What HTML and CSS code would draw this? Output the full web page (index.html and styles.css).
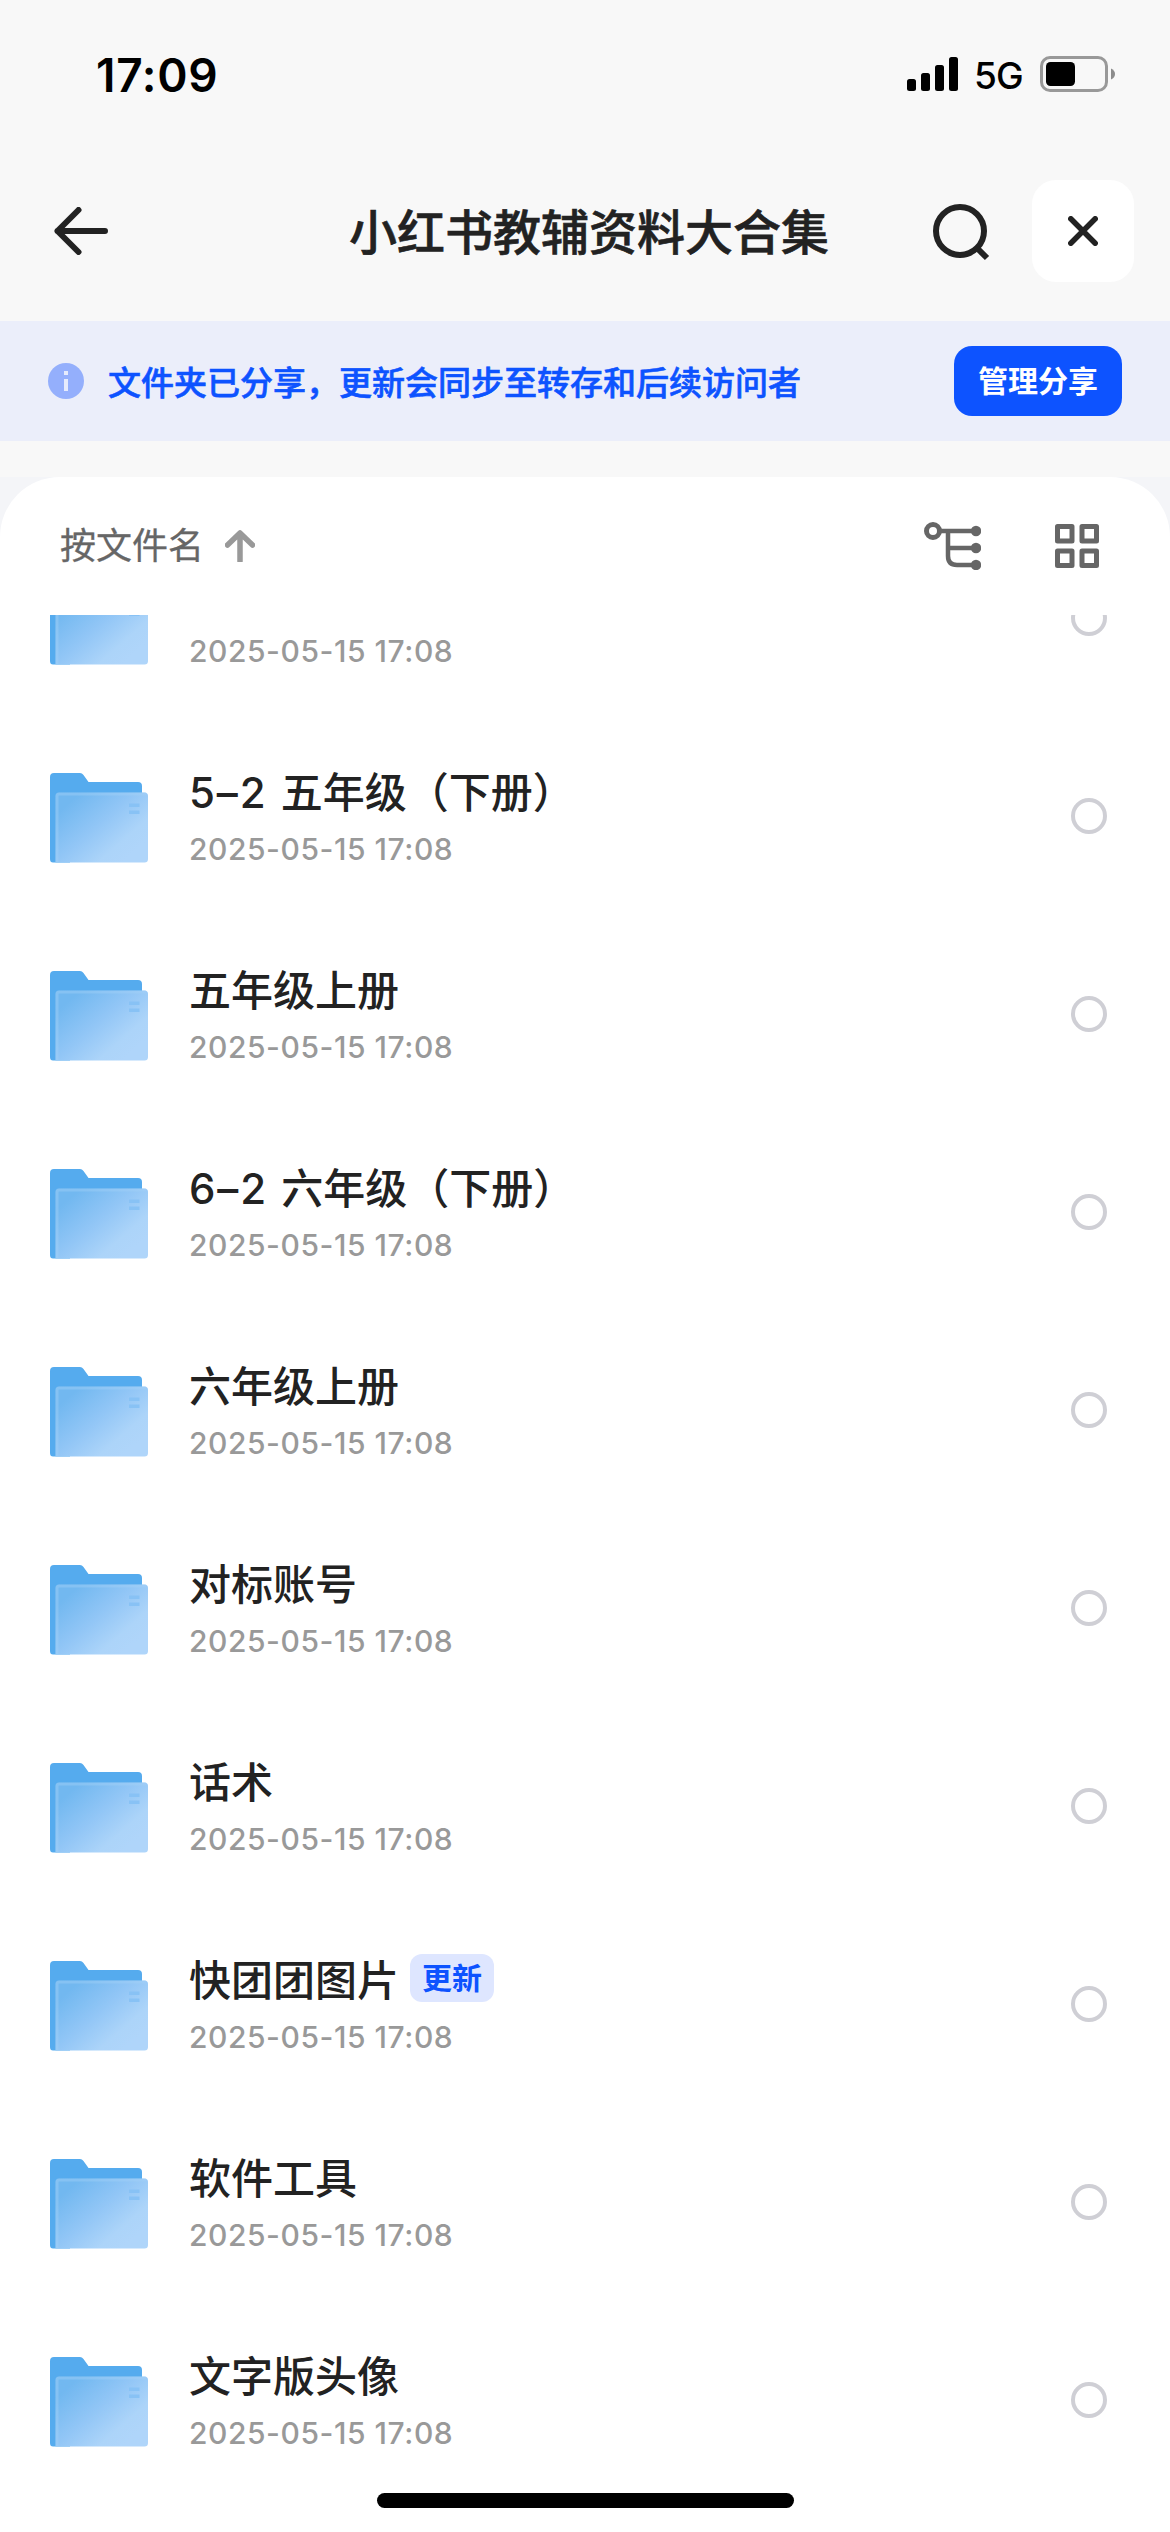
FILE: index.html
```html
<!DOCTYPE html>
<html lang="zh-CN">
<head>
<meta charset="utf-8">
<title>小红书教辅资料大合集</title>
<link rel="stylesheet" href="styles.css">
</head>
<body>
<svg class="defs" width="0" height="0" aria-hidden="true">
  <defs>
    <linearGradient id="front" x1="0.1" y1="0.2" x2="0.85" y2="0.85">
      <stop offset="0" stop-color="#72b8f0"/>
      <stop offset="0.45" stop-color="#92c6f6"/>
      <stop offset="0.8" stop-color="#acd4f9"/>
      <stop offset="1" stop-color="#afd5fa"/>
    </linearGradient>
    <symbol id="folder" viewBox="0 0 98 90">
      <path d="M4 0H30Q32 0 33.500 2L38.500 9H88Q92 9 92 13V30H20V89.500H3Q0 89.500 0 86V4Q0 0 4 0Z" fill="#55abee"/>
      <path d="M9 19.500H94.500Q98 19.500 98 23V86Q98 89.500 94.500 89.500H5.500V23Q5.500 19.500 9 19.500Z" fill="url(#front)"/>
      <path d="M7 89.500V23Q7 21 9 21H96" fill="none" stroke="#a6d2f8" stroke-opacity="0.4" stroke-width="3"/>
      <path d="M79 30.500H89.500V34H79ZM79 37.500H89.500V41H79Z" fill="#88c2f5"/>
    </symbol>
  </defs>
</svg>
<div class="screen">
  <header class="status">
    <span class="time">17:09</span>
    <div class="status-icons">
      <svg class="signal" width="51" height="34" viewBox="0 0 51 34"><rect x="0" y="22" width="9" height="12" rx="2.500"/><rect x="14" y="16" width="9" height="18" rx="2.500"/><rect x="28" y="8" width="9" height="26" rx="2.500"/><rect x="42" y="0" width="9" height="34" rx="2.500"/></svg>
      <span class="network">5G</span>
      <svg class="battery" width="76" height="36" viewBox="0 0 76 36"><rect x="1.500" y="1.500" width="65" height="33" rx="8.500" fill="none" stroke="#999" stroke-width="3"/><rect x="6" y="6" width="29" height="24" rx="4.500"/><path d="M71 12.500Q75 14.500 75 18T71 23.500Z" fill="#8c8c8c"/></svg>
    </div>
  </header>
  <nav class="nav">
    <svg class="back" width="54" height="48" viewBox="0 0 54 48"><path d="M24.500 3L3.500 24L24.500 45M3.500 24H51"/></svg>
    <h1 class="title">小红书教辅资料大合集</h1>
    <svg class="search" width="58" height="58" viewBox="0 0 58 58"><circle cx="27" cy="27" r="24"/><path d="M44 44L54 54"/></svg>
    <button class="close" type="button" aria-label="关闭"><svg width="30" height="30" viewBox="0 0 30 30"><path d="M2.800 2.800L27.200 27.200M27.200 2.800L2.800 27.200"/></svg></button>
  </nav>
  <section class="banner">
    <svg class="info" width="36" height="36" viewBox="0 0 36 36"><circle cx="18" cy="18" r="18" fill="#94affc"/><path d="M16 8H20V12H16ZM16 16H20V28H16Z" fill="#e6ebfc"/></svg>
    <p class="banner-text">文件夹已分享，更新会同步至转存和后续访问者</p>
    <button class="manage" type="button">管理分享</button>
  </section>
  <main class="sheet-area">
    <div class="sheet">
      <div class="toolbar">
        <span class="sort">按文件名</span>
        <svg class="arrow" width="30" height="32" viewBox="0 0 30 32"><path d="M15 4V31M2.500 15L15 3L27.500 15"/></svg>
        <svg class="tree" width="57" height="48" viewBox="0 0 57 48"><g fill="none" stroke="#666" stroke-width="4.500"><circle cx="9" cy="9" r="6.500" stroke-width="5"/><path d="M15 9H52M24 9V26M24 26H52M24 22V34Q24 43 33 43H52"/></g><g fill="#666"><circle cx="52" cy="9" r="5.200"/><circle cx="52" cy="26" r="5.200"/><circle cx="52" cy="43" r="5.200"/></g></svg>
        <svg class="grid" width="44" height="44" viewBox="0 0 44 44"><g fill="none" stroke="#666" stroke-width="5" stroke-linejoin="round"><rect x="2.500" y="2.500" width="14.500" height="14.500"/><rect x="27" y="2.500" width="14.500" height="14.500"/><rect x="2.500" y="27" width="14.500" height="14.500"/><rect x="27" y="27" width="14.500" height="14.500"/></g></svg>
      </div>
      <div class="viewport">
        <ul class="list">
          <li class="row"><svg class="folder"><use href="#folder"/></svg><div class="info-col"><div class="name"></div><div class="date">2025-05-15 17:08</div></div><span class="radio"></span></li>
          <li class="row"><svg class="folder"><use href="#folder"/></svg><div class="info-col"><div class="name"><span class="latin">5–2 </span>五年级（下册）</div><div class="date">2025-05-15 17:08</div></div><span class="radio"></span></li>
          <li class="row"><svg class="folder"><use href="#folder"/></svg><div class="info-col"><div class="name">五年级上册</div><div class="date">2025-05-15 17:08</div></div><span class="radio"></span></li>
          <li class="row"><svg class="folder"><use href="#folder"/></svg><div class="info-col"><div class="name"><span class="latin">6–2 </span>六年级（下册）</div><div class="date">2025-05-15 17:08</div></div><span class="radio"></span></li>
          <li class="row"><svg class="folder"><use href="#folder"/></svg><div class="info-col"><div class="name">六年级上册</div><div class="date">2025-05-15 17:08</div></div><span class="radio"></span></li>
          <li class="row"><svg class="folder"><use href="#folder"/></svg><div class="info-col"><div class="name">对标账号</div><div class="date">2025-05-15 17:08</div></div><span class="radio"></span></li>
          <li class="row"><svg class="folder"><use href="#folder"/></svg><div class="info-col"><div class="name">话术</div><div class="date">2025-05-15 17:08</div></div><span class="radio"></span></li>
          <li class="row"><svg class="folder"><use href="#folder"/></svg><div class="info-col"><div class="name">快团团图片<span class="badge">更新</span></div><div class="date">2025-05-15 17:08</div></div><span class="radio"></span></li>
          <li class="row"><svg class="folder"><use href="#folder"/></svg><div class="info-col"><div class="name">软件工具</div><div class="date">2025-05-15 17:08</div></div><span class="radio"></span></li>
          <li class="row"><svg class="folder"><use href="#folder"/></svg><div class="info-col"><div class="name">文字版头像</div><div class="date">2025-05-15 17:08</div></div><span class="radio"></span></li>
        </ul>
      </div>
    </div>
  </main>
  <div class="home-indicator"></div>
</div>
</body>
</html>
```
FILE: styles.css
```css
* { box-sizing: border-box; margin: 0; padding: 0; }

body {
  width: 1170px;
  height: 2532px;
  overflow: hidden;
  background: #f8f8f8;
  color: #222;
  font-family: Inter, "Noto Sans CJK SC", sans-serif;
}

button { border: 0; font-family: inherit; }
svg { display: block; flex: none; }
.defs { position: absolute; }

.screen {
  position: relative;
  display: flex;
  flex-direction: column;
  height: 2532px;
}

.status {
  display: flex;
  justify-content: space-between;
  align-items: center;
  height: 148px;
  padding: 0 54px 0 96px;
  color: #000;
}
.time { font-size: 46px; font-weight: 600; line-height: 56px; letter-spacing: 0.7px; padding-top: 1px; }
.status-icons { display: flex; align-items: center; }
.network { margin-left: 16px; width: 66px; font-size: 37px; font-weight: 500; line-height: 44px; letter-spacing: -0.8px; padding-top: 3px; }

.nav {
  display: flex;
  align-items: center;
  height: 173px;
  padding: 0 36px 7px 54px;
}
.back { fill: none; stroke: #222; stroke-width: 6; stroke-linecap: round; stroke-linejoin: round; }
.title {
  margin-left: 241px;
  padding-top: 3px;
  width: 584px;
  font-size: 48px;
  font-weight: 500;
  -webkit-text-stroke: 0.6px #222;
  line-height: 72px;
  white-space: nowrap;
}
.search { margin-top: 4px; fill: none; stroke: #222; stroke-width: 6; }
.close {
  display: flex;
  align-items: center;
  justify-content: center;
  margin-left: auto;
  width: 102px;
  height: 102px;
  border-radius: 24px;
  background: #fff;
}
.close svg { fill: none; stroke: #222; stroke-width: 5.500; stroke-linecap: round; }

.banner {
  display: flex;
  align-items: center;
  height: 120px;
  padding: 0 48px;
  background: #ebeefa;
}
.banner-text {
  margin-left: 24px;
  padding-top: 4px;
  font-size: 33px;
  font-weight: 500;
  -webkit-text-stroke: 0.6px #0d53ff;
  line-height: 48px;
  color: #0d53ff;
  white-space: nowrap;
}
.manage {
  margin-left: auto;
  width: 168px;
  height: 70px;
  border-radius: 18px;
  background: #0d53ff;
  color: #fff;
  font-size: 30px;
  font-weight: 700;
  line-height: 44px;
}

.sheet-area {
  flex: 1;
  margin-top: 36px;
  min-height: 0;
  background: #f4f5f8;
}
.sheet {
  display: flex;
  flex-direction: column;
  height: 100%;
  border-radius: 60px 60px 0 0;
  background: #fff;
}
.toolbar {
  display: flex;
  align-items: center;
  height: 138px;
  padding: 0 71px 0 60px;
}
.sort { font-size: 36px; line-height: 52px; color: #666; -webkit-text-stroke: 0.3px #666; }
.arrow { margin-left: 21px; fill: none; stroke: #999; stroke-width: 5.500; stroke-linecap: round; stroke-linejoin: round; }
.tree { margin-left: auto; }
.grid { margin-left: 74px; }

.viewport { flex: 1; min-height: 0; overflow: hidden; }
.list { margin-top: -96px; list-style: none; }
.row {
  display: flex;
  align-items: center;
  height: 198px;
  padding: 0 63px 0 50px;
}
.folder { width: 98px; height: 90px; margin-top: 3px; }
.info-col { flex: 1; margin-left: 41px; padding-top: 4px; }
.name {
  display: flex;
  align-items: center;
  height: 60px;
  font-size: 42px;
  line-height: 60px;
  font-weight: 500;
  white-space: pre;
}
.latin { letter-spacing: 1.9px; }
.badge {
  margin: -7px 0 0 11px;
  width: 84px;
  height: 48px;
  border-radius: 12px;
  background: #dee6ff;
  color: #0d53ff;
  font-size: 30px;
  font-weight: 600;
  line-height: 48px;
  text-align: center;
}
.date { height: 50px; font-size: 30px; font-weight: 500; line-height: 52px; color: #999; letter-spacing: 0.55px; }
.radio { width: 36px; height: 36px; border: 4px solid #cfcfd5; border-radius: 50%; }

.home-indicator {
  position: absolute;
  left: 377px;
  bottom: 24px;
  width: 417px;
  height: 15px;
  border-radius: 8px;
  background: #000;
}
```
